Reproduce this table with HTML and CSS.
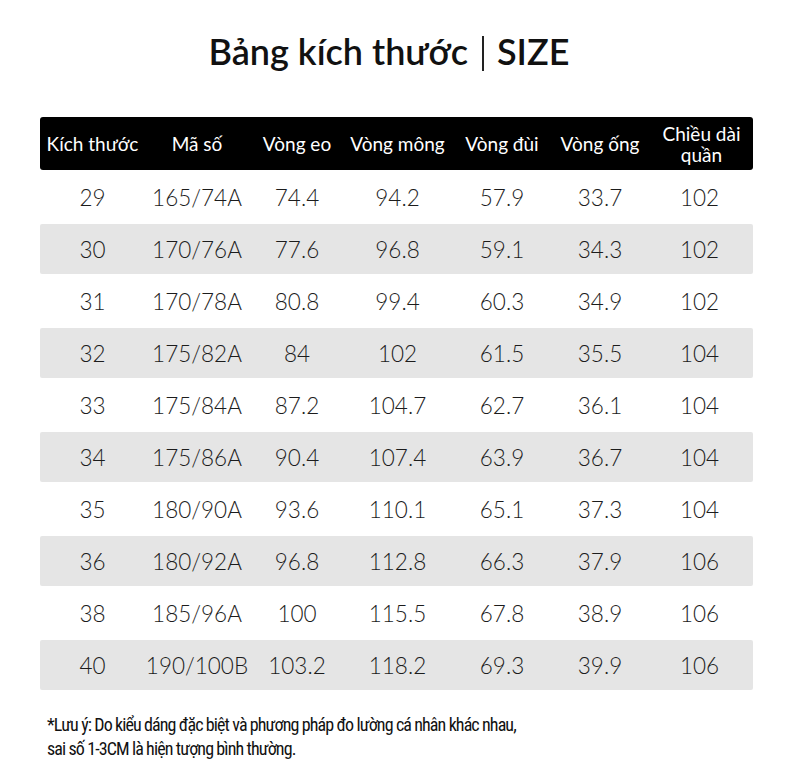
FILE: index.html
```html
<!DOCTYPE html>
<html lang="vi">
<head>
<meta charset="utf-8">
<title>Bảng kích thước | SIZE</title>
<link rel="stylesheet" href="styles.css">
</head>
<body>
<div class="page">
  <h1 class="title"><span>Bảng kích thước</span><span class="bar"></span><span>SIZE</span></h1>
  <div class="table">
    <div class="row head">
      <div>Kích thước</div><div>Mã số</div><div>Vòng eo</div><div>Vòng mông</div><div>Vòng đùi</div><div>Vòng ống</div><div class="two">Chiều dài<br>quần</div>
    </div>
    <div class="row"><div>29</div><div>165/74A</div><div>74.4</div><div>94.2</div><div>57.9</div><div>33.7</div><div>102</div></div>
    <div class="row alt"><div>30</div><div>170/76A</div><div>77.6</div><div>96.8</div><div>59.1</div><div>34.3</div><div>102</div></div>
    <div class="row"><div>31</div><div>170/78A</div><div>80.8</div><div>99.4</div><div>60.3</div><div>34.9</div><div>102</div></div>
    <div class="row alt"><div>32</div><div>175/82A</div><div>84</div><div>102</div><div>61.5</div><div>35.5</div><div>104</div></div>
    <div class="row"><div>33</div><div>175/84A</div><div>87.2</div><div>104.7</div><div>62.7</div><div>36.1</div><div>104</div></div>
    <div class="row alt"><div>34</div><div>175/86A</div><div>90.4</div><div>107.4</div><div>63.9</div><div>36.7</div><div>104</div></div>
    <div class="row"><div>35</div><div>180/90A</div><div>93.6</div><div>110.1</div><div>65.1</div><div>37.3</div><div>104</div></div>
    <div class="row alt"><div>36</div><div>180/92A</div><div>96.8</div><div>112.8</div><div>66.3</div><div>37.9</div><div>106</div></div>
    <div class="row"><div>38</div><div>185/96A</div><div>100</div><div>115.5</div><div>67.8</div><div>38.9</div><div>106</div></div>
    <div class="row alt"><div>40</div><div>190/100B</div><div>103.2</div><div>118.2</div><div>69.3</div><div>39.9</div><div>106</div></div>
  </div>
  <p class="note">*Lưu ý: Do kiểu dáng đặc biệt và phương pháp đo lường cá nhân khác nhau,<br>sai số 1-3CM là hiện tượng bình thường.</p>
</div>
</body>
</html>
```
FILE: styles.css
```css
html, body {
  margin: 0;
  padding: 0;
  background: #ffffff;
}
.page {
  width: 790px;
  padding-top: 30px;
  font-family: "Lato", "Open Sans", sans-serif;
  color: #1a1a1a;
}
.title {
  margin: 0;
  padding-right: 12px;
  display: flex;
  justify-content: center;
  align-items: center;
  font-size: 36px;
  font-weight: 600;
  line-height: 43px;
  height: 43px;
  color: #111;
}
.bar {
  display: inline-block;
  width: 2px;
  height: 35px;
  background: #222;
  margin: 3px 13px 0 14px;
}
.table {
  margin: 44px 0 0 40px;
  width: 713px;
  display: flex;
  flex-direction: column;
  gap: 2px;
}
.row {
  display: grid;
  grid-template-columns: 105px 104px 96px 105px 104px 92px 107px;
  height: 50px;
  align-items: center;
  text-align: center;
  font-size: 22.5px;
  font-weight: 300;
  color: #1c1c1c;
  border-radius: 2px;
  white-space: nowrap;
}
.row.alt {
  background: #e5e5e5;
}
.row.head {
  height: 53px;
  background: #000;
  color: #fff;
  font-size: 19px;
  font-weight: 400;
  border-radius: 3px;
}
.row.head .two {
  line-height: 21px;
  padding-left: 4px;
}
.note {
  margin: 23px 0 0 47px;
  font-family: "Roboto Condensed", "Lato", sans-serif;
  font-size: 18px;
  letter-spacing: -0.9px;
  line-height: 24px;
  color: #111;
}
```
